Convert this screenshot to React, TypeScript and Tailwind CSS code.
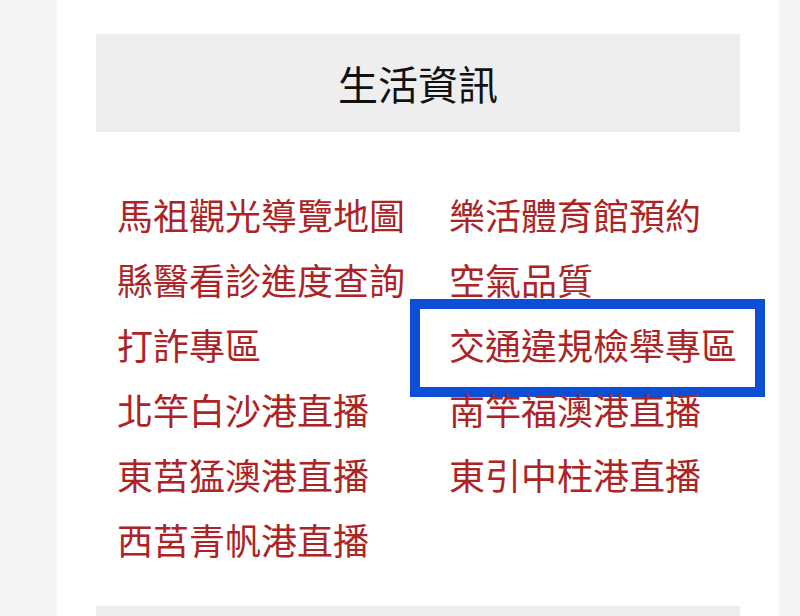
import React from 'react';

const LINKS: string[][] = [
  ['馬祖觀光導覽地圖', '樂活體育館預約'],
  ['縣醫看診進度查詢', '空氣品質'],
  ['打詐專區', '交通違規檢舉專區'],
  ['北竿白沙港直播', '南竿福澳港直播'],
  ['東莒猛澳港直播', '東引中柱港直播'],
  ['西莒青帆港直播', ''],
];

const HIGHLIGHT = '交通違規檢舉專區';

const App: React.FC = () => {
  return (
    <div
      className="h-[616px] w-[800px] overflow-hidden bg-[#f4f4f4]"
      style={{ fontFamily: '"Noto Sans CJK TC", "Noto Sans", sans-serif' }}
    >
      <div className="ml-[57px] h-full w-[722px] bg-white px-[39px] pt-[34px]">
        {/* Section header */}
        <div className="flex h-[98px] items-center justify-center bg-[#eeeeee]">
          <h2 className="text-[40px] font-normal leading-none text-[#111111]">生活資訊</h2>
        </div>

        {/* Links */}
        <div className="mt-[50px] grid grid-cols-[332px_1fr] pl-[21px]">
          {LINKS.flat().map((label, i) => (
            <div key={i} className="relative h-[65px] text-[36px] leading-[65px] text-[#ac2426]">
              {label && <a className="cursor-pointer whitespace-nowrap">{label}</a>}
              {label === HIGHLIGHT && (
                <div className="pointer-events-none absolute -left-[39px] -top-[13px] h-[98px] w-[355px] border-[10px] border-[#0b4fd6]" />
              )}
            </div>
          ))}
        </div>

        {/* Next section header (cut off) */}
        <div className="mt-[34px] h-[98px] bg-[#eeeeee]" />
      </div>
    </div>
  );
};

export default App;
